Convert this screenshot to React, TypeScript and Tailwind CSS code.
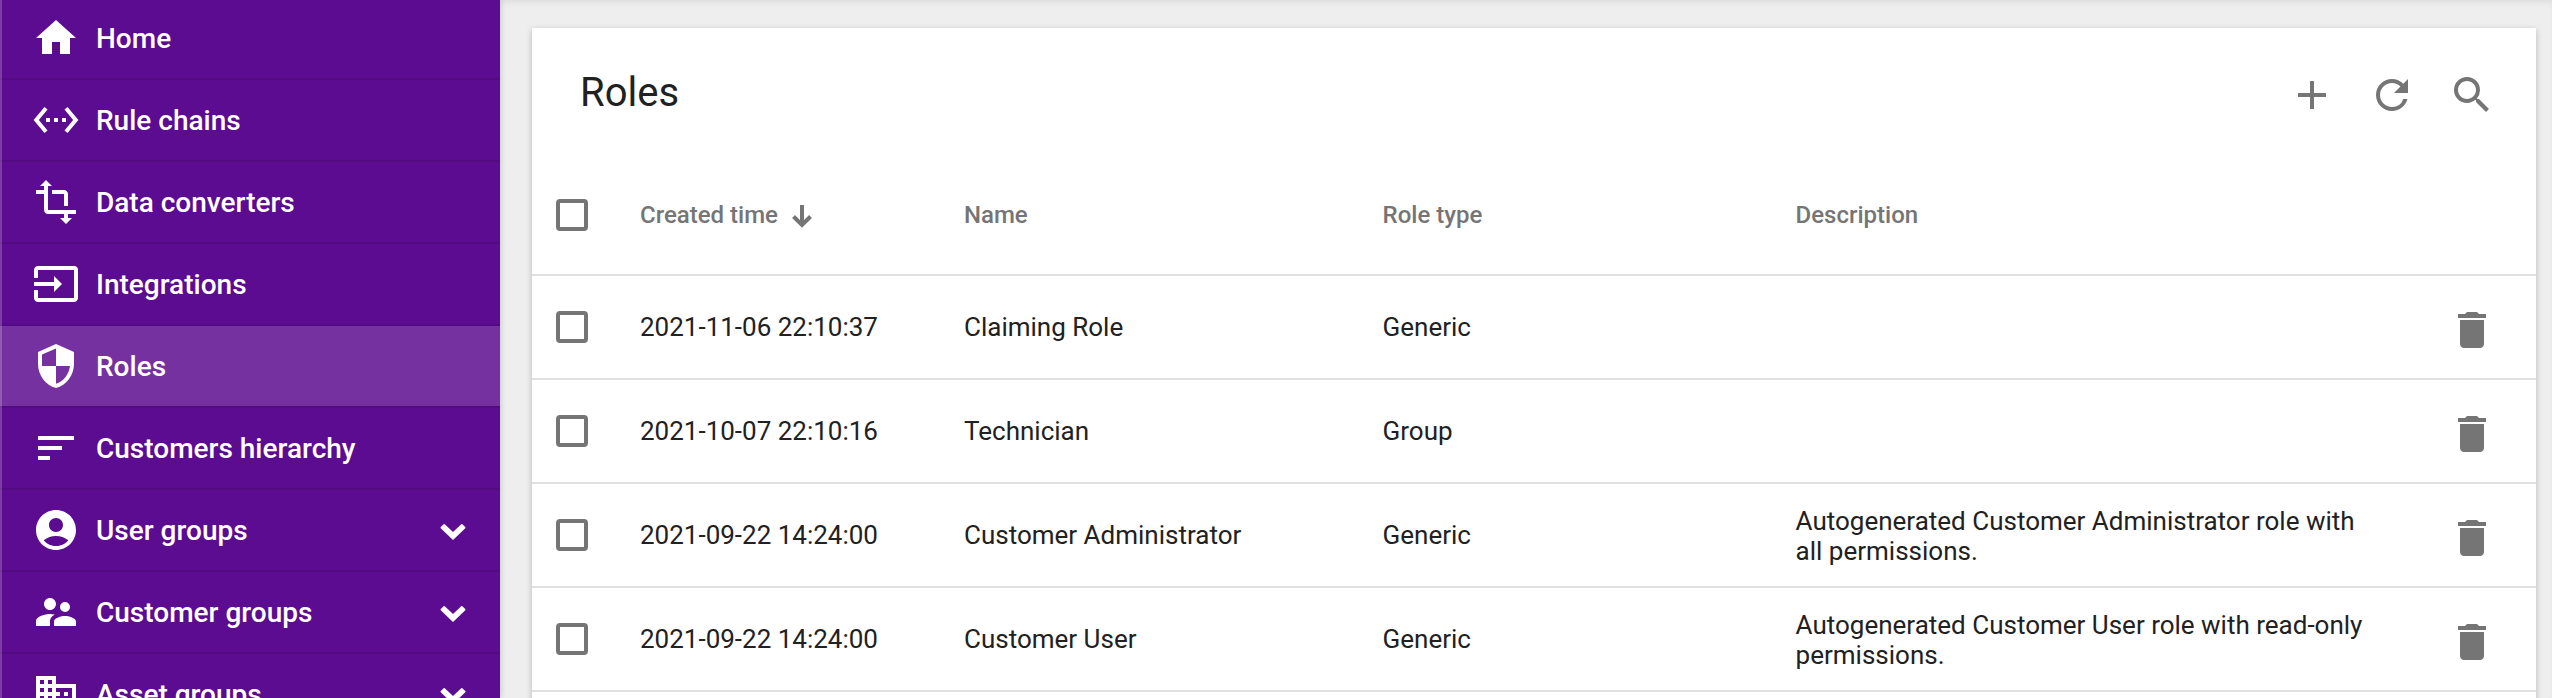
import type { ReactNode } from "react";
import {
  MdHome, MdSettingsEthernet, MdTransform, MdInput, MdSecurity, MdSort, MdAccountCircle,
  MdSupervisorAccount, MdDomain, MdAdd, MdRefresh, MdSearch, MdDelete,
} from "react-icons/md";

type NavItem = { label: string; icon: ReactNode; active?: boolean; expandable?: boolean };

const nav: NavItem[] = [
  { label: "Home", icon: <MdHome /> },
  { label: "Rule chains", icon: <MdSettingsEthernet /> },
  { label: "Data converters", icon: <MdTransform /> },
  { label: "Integrations", icon: <MdInput /> },
  { label: "Roles", icon: <MdSecurity />, active: true },
  { label: "Customers hierarchy", icon: <MdSort /> },
  { label: "User groups", icon: <MdAccountCircle />, expandable: true },
  { label: "Customer groups", icon: <MdSupervisorAccount />, expandable: true },
  { label: "Asset groups", icon: <MdDomain />, expandable: true },
];

const rows = [
  { time: "2021-11-06 22:10:37", name: "Claiming Role", type: "Generic", description: "" },
  { time: "2021-10-07 22:10:16", name: "Technician", type: "Group", description: "" },
  { time: "2021-09-22 14:24:00", name: "Customer Administrator", type: "Generic", description: "Autogenerated Customer Administrator role with all permissions." },
  { time: "2021-09-22 14:24:00", name: "Customer User", type: "Generic", description: "Autogenerated Customer User role with read-only permissions." },
];

const columns = "grid grid-cols-[108px_324px_418.6px_413px_570.4px_1fr] items-center";

function Chevron() {
  return (
    <svg
      className="mt-1 h-[18px] w-[26px]"
      viewBox="0 0 26 18"
      fill="currentColor"
      stroke="currentColor"
      strokeWidth="1.6"
      strokeLinejoin="round"
    >
      <path d="M1.3 4.700 4.200 1.900 13 10.200 21.800 1.900 24.700 4.700 13 16z" />
    </svg>
  );
}

function Checkbox() {
  return <span className="ml-6 block size-8 rounded-[4px] border-4 border-[#757575]" />;
}

export default function App() {
  return (
    <div className="flex h-[698px] w-[2552px] overflow-hidden bg-[#eeeeee] font-['Roboto',sans-serif]">
      <nav className="relative w-[500px] shrink-0 bg-[#5c0c90] text-white shadow-[1px_0_6px_rgba(0,0,0,0.14)]">
        <div className="-mt-0.5">
          {nav.map((item) => (
            <div
              key={item.label}
              className={`flex h-[82px] items-center border-b-2 border-[#530b82] pl-8 pr-[34px] ${item.active ? "bg-[#7631a1]" : ""}`}
            >
              <span className="text-[48px]">{item.icon}</span>
              <span className="ml-4 flex-1 pt-0.5 text-[28px] font-medium">{item.label}</span>
              {item.expandable && <Chevron />}
            </div>
          ))}
        </div>
        <div className="absolute inset-y-0 left-0 w-0.5 bg-white/20" />
      </nav>

      <main className="flex-1 pt-7 pr-4 pl-8 shadow-[inset_0_4px_6px_-2px_rgba(0,0,0,0.08)]">
        <section className="h-[800px] bg-white text-[#212121] shadow-[0_2px_6px_rgba(0,0,0,0.24)]">
          <header className="flex h-32 items-center justify-between pr-[40px] pl-12">
            <h1 className="pt-0.5 text-[40px]">Roles</h1>
            <div className="flex gap-8 pt-1.5 text-[48px] text-[#757575]">
              <MdAdd />
              <MdRefresh />
              <MdSearch />
            </div>
          </header>

          <div className={`${columns} h-[120px] border-b-2 border-[#e0e0e0] text-2xl font-medium text-[#757575]`}>
            <Checkbox />
            <span className="flex items-center gap-[14px]">
              Created time
              <svg className="mt-0.5 h-6 w-5" viewBox="0 0 20 24" fill="none" stroke="currentColor" strokeWidth="4">
                <path d="M10 1v20M1.5 12.5 10 21l8.500-8.500" />
              </svg>
            </span>
            <span>Name</span>
            <span>Role type</span>
            <span>Description</span>
          </div>

          {rows.map((row, i) => (
            <div key={i} className={`${columns} h-[104px] border-b-2 border-[#e0e0e0] text-[26px] leading-[30px]`}>
              <Checkbox />
              <span>{row.time}</span>
              <span>{row.name}</span>
              <span>{row.type}</span>
              <span className="pt-0.5">{row.description}</span>
              <span className="pt-1.5 pl-[82px]">
                <MdDelete className="size-12 text-[#757575]" />
              </span>
            </div>
          ))}
        </section>
      </main>
    </div>
  );
}
